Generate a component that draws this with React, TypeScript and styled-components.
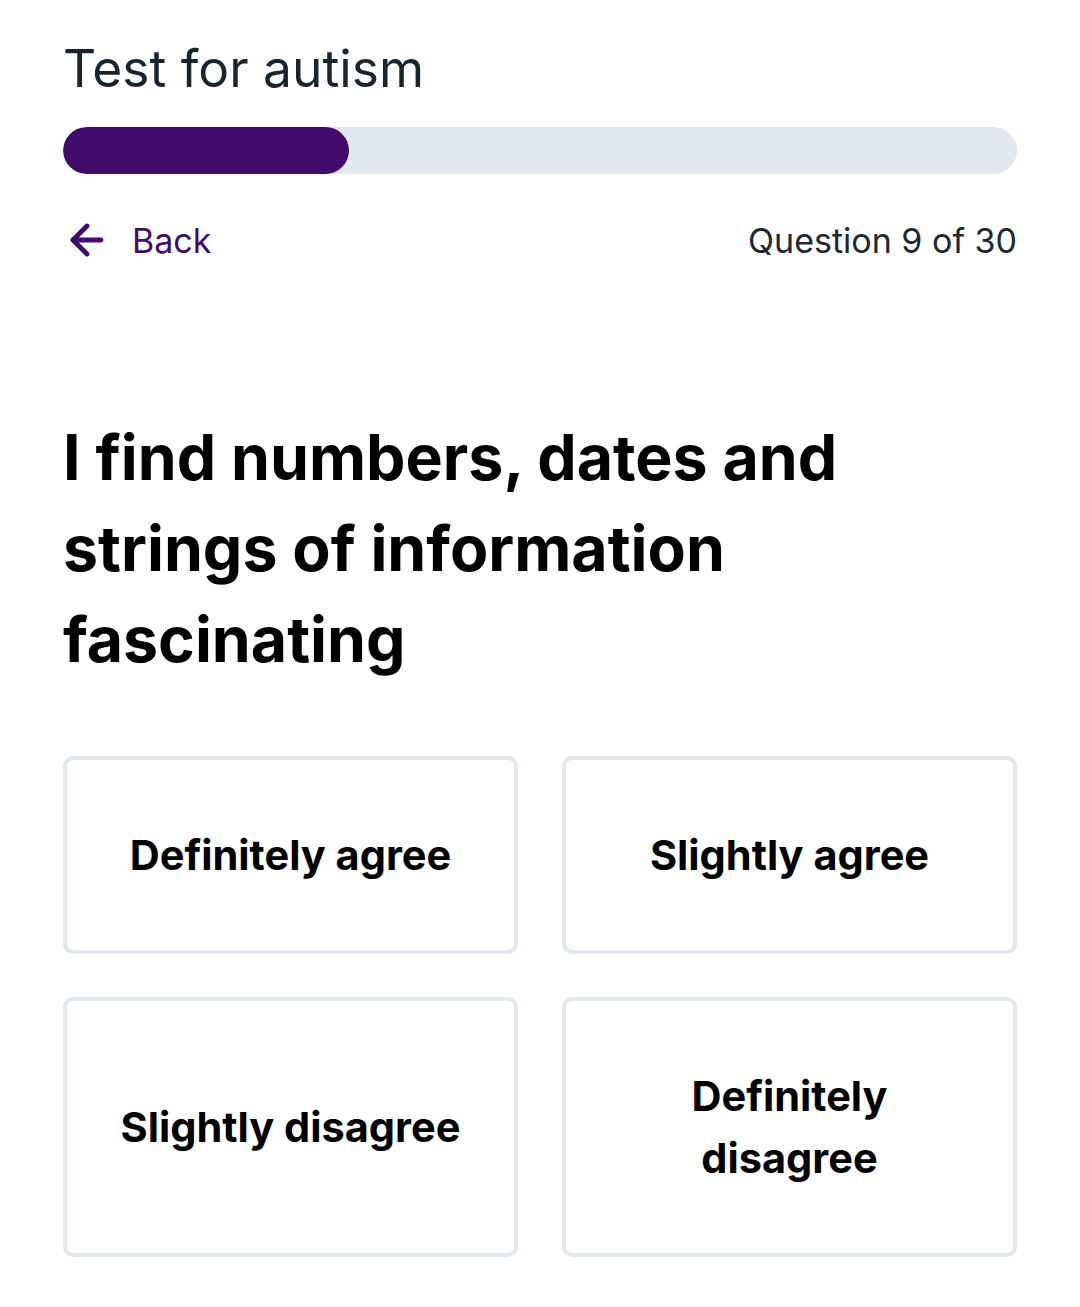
import React from "react";
import styled, { createGlobalStyle } from "styled-components";
import { ArrowLeft } from "lucide-react";

const GlobalStyle = createGlobalStyle`
    body {
        margin: 0;
        background: #ffffff;
        font-family: Inter, "Noto Sans", sans-serif;
    }
`;

const Page = styled.div`
    padding: 34px 63px 40px;
    display: flex;
    flex-direction: column;
`;

const Title = styled.h1`
    margin: 0;
    font-size: 51.5px;
    font-weight: 400;
    line-height: 68px;
    color: #18242f;
`;

const Track = styled.div`
    margin-top: 25px;
    height: 47px;
    border-radius: 24px;
    background: #e2e8f0;
    overflow: hidden;
`;

const Fill = styled.div`
    height: 100%;
    border-radius: 24px;
    background: #420a6a;
`;

const NavRow = styled.div`
    margin-top: 42px;
    display: flex;
    align-items: center;
    justify-content: space-between;
`;

const BackButton = styled.button`
    display: flex;
    align-items: center;
    gap: 21px;
    padding: 0;
    border: none;
    background: none;
    color: #420a6a;
    font-family: inherit;
    font-size: 34px;
    cursor: pointer;
`;

const Counter = styled.span`
    font-size: 34px;
    color: #1c2833;
`;

const Question = styled.h2`
    margin: 148px 0 0;
    font-size: 62.6px;
    font-weight: 700;
    line-height: 91px;
    color: #000;
`;

const Answers = styled.div`
    margin-top: 71px;
    display: grid;
    grid-template-columns: 1fr 1fr;
    gap: 43px 44px;
`;

const Answer = styled.button`
    border: 4px solid #e2e8f0;
    border-radius: 10px;
    background: #fff;
    padding: 64px 44px;
    font-family: inherit;
    font-size: 41.5px;
    font-weight: 700;
    line-height: 62px;
    color: #000;
    text-align: center;
    cursor: pointer;
`;

const options = ["Definitely agree", "Slightly agree", "Slightly disagree", "Definitely disagree"];

export default function App() {
    const current = 9;
    const total = 30;
    return (
        <>
            <GlobalStyle />
            <Page>
                <Title>Test for autism</Title>
                <Track>
                    <Fill style={{ width: `${(current / total) * 100}%` }} />
                </Track>
                <NavRow>
                    <BackButton>
                        <ArrowLeft size={48} strokeWidth={2.4} />
                        Back
                    </BackButton>
                    <Counter>Question {current} of {total}</Counter>
                </NavRow>
                <Question>I find numbers, dates and strings of information fascinating</Question>
                <Answers>
                    {options.map((o) => (
                        <Answer key={o}>{o}</Answer>
                    ))}
                </Answers>
            </Page>
        </>
    );
}
